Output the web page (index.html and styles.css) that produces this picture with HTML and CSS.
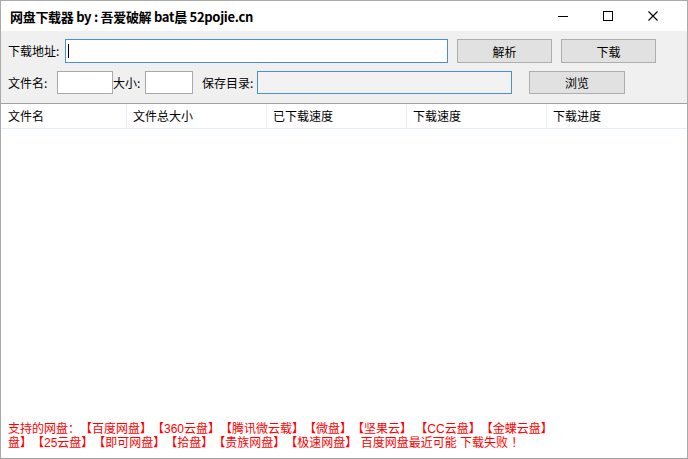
FILE: index.html
```html
<!DOCTYPE html>
<html lang="zh-CN">
<head>
    <meta charset="UTF-8">
    <title>网盘下载器</title>
    <link rel="stylesheet" href="styles.css">
</head>
<body>
    <div class="window">
        <div class="titlebar">
            <span class="title">网盘下载器 by : 吾爱破解 bat晨 52pojie.cn</span>
            <div class="controls">
                <span class="ctl">
                    <svg width="12" height="12" viewBox="0 0 12 12"><path d="M1 6.5h10" stroke="#000" stroke-width="1"/></svg>
                </span>
                <span class="ctl">
                    <svg width="12" height="12" viewBox="0 0 12 12"><rect x="1.5" y="1.5" width="9" height="9" fill="none" stroke="#000" stroke-width="1"/></svg>
                </span>
                <span class="ctl">
                    <svg width="12" height="12" viewBox="0 0 12 12"><path d="M1.5 1.5l9 9M10.5 1.5l-9 9" stroke="#000" stroke-width="1.1"/></svg>
                </span>
            </div>
        </div>

        <div class="form">
            <div class="row">
                <span class="label w-url">下载地址:</span>
                <div class="field url focus"><span class="caret"></span></div>
                <button class="btn">解析</button>
                <button class="btn">下载</button>
            </div>
            <div class="row row2">
                <span class="label w-name">文件名:</span>
                <div class="field name"></div>
                <span class="label w-size">大小:</span>
                <div class="field size"></div>
                <span class="label w-dir">保存目录:</span>
                <div class="field dir focus readonly"></div>
                <button class="btn browse">浏览</button>
            </div>
        </div>

        <div class="list">
            <div class="list-header">
                <span class="col c1">文件名</span>
                <span class="col c2">文件总大小</span>
                <span class="col c3">已下载速度</span>
                <span class="col c4">下载速度</span>
                <span class="col c5">下载进度</span>
            </div>
            <div class="list-body"></div>
            <div class="notice">
                <div>支持的网盘：【百度网盘】【360云盘】【腾讯微云载】【微盘】【坚果云】 【CC云盘】【金蝶云盘】</div>
                <div>盘】【25云盘】【即可网盘】【拾盘】【贵族网盘】【极速网盘】 百度网盘最近可能 下载失败 ！</div>
            </div>
        </div>
    </div>
</body>
</html>
```

FILE: styles.css
```css
html, body {
    margin: 0;
    padding: 0;
}

body {
    font-family: "Noto Sans CJK SC", "Noto Sans", sans-serif;
    font-size: 12px;
    color: #000;
    background: #fff;
    text-spacing-trim: space-all;
}

.window {
    width: 688px;
    height: 459px;
    box-sizing: border-box;
    border: 1px solid #aaaaaa;
    border-bottom: none;
    display: flex;
    flex-direction: column;
}

.titlebar {
    height: 30px;
    display: flex;
    align-items: center;
    justify-content: space-between;
    background: #fff;
    padding-left: 9px;
}

.title {
    font-weight: bold;
    font-size: 13px;
    letter-spacing: -0.3px;
}

.controls {
    display: flex;
    height: 30px;
    align-items: center;
    margin-right: 12px;
}

.ctl {
    width: 45px;
    display: flex;
    justify-content: center;
}

.form {
    background: #f0f0f0;
    height: 72px;
    box-sizing: border-box;
    padding: 8px 0 0 7px;
}

.row {
    display: flex;
    align-items: center;
    height: 24px;
}

.row2 {
    margin-top: 8px;
    height: 23px;
}

.label {
    white-space: nowrap;
    line-height: 20px;
}

.w-url { width: 57px; }
.w-name { width: 49px; }
.w-size { width: 32px; }
.w-dir { width: 55px; margin-left: 9px; }

.field {
    box-sizing: border-box;
    height: 100%;
    background: #fff;
    border: 1px solid #a9a9a9;
    display: flex;
    align-items: center;
}

.field.focus {
    border-color: #4a90d9;
}

.field.readonly {
    background: #f2f2f2;
}

.url { width: 383px; }
.name { width: 56px; }
.size { width: 48px; }
.dir { width: 255px; }

.caret {
    width: 1px;
    height: 14px;
    background: #000;
    margin-left: 2px;
}

.btn {
    box-sizing: border-box;
    width: 95px;
    height: 24px;
    margin-left: 9px;
    background: #e1e1e1;
    border: 1px solid #adadad;
    font-family: inherit;
    font-size: 12px;
    color: #000;
    padding: 0;
}

.btn.browse {
    width: 96px;
    height: 23px;
    margin-left: 17px;
}

.list {
    flex: 1;
    display: flex;
    flex-direction: column;
    border-top: 1px solid #a0a0a0;
    border-bottom: 1px solid #a0a0a0;
    background: #fff;
}

.list-header {
    display: flex;
    height: 24px;
    border-bottom: 1px solid #e5eef7;
}

.col {
    box-sizing: border-box;
    height: 100%;
    line-height: 24px;
    padding-left: 6px;
    border-right: 1px solid #e5eef7;
}

.c1 { width: 126px; padding-left: 7px; }
.c2 { width: 140px; }
.c3 { width: 140px; }
.c4 { width: 140px; }
.c5 { flex: 1; border-right: none; }

.list-body {
    flex: 1;
}

.notice {
    font-family: "Liberation Sans", "Noto Sans CJK SC", sans-serif;
    color: #ff0000;
    line-height: 14px;
    padding: 0 0 8px 7px;
    white-space: nowrap;
}
```
